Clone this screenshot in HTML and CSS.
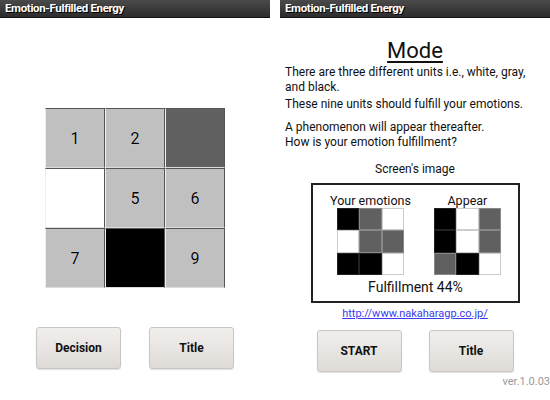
FILE: index.html
```html
<!DOCTYPE html>
<html lang="en">
<head>
  <meta charset="UTF-8">
  <meta name="viewport" content="width=device-width, initial-scale=1.0">
  <title>Emotion-Fulfilled Energy</title>
  <link rel="stylesheet" href="styles.css">
</head>
<body>

  <div class="phone">
    <div class="titlebar">Emotion-Fulfilled Energy</div>

    <div class="board">
      <div class="cell gray">1</div>
      <div class="cell gray">2</div>
      <div class="cell dark"></div>
      <div class="cell white"></div>
      <div class="cell gray">5</div>
      <div class="cell gray">6</div>
      <div class="cell gray">7</div>
      <div class="cell black"></div>
      <div class="cell gray">9</div>
    </div>

    <div class="buttons buttons-left">
      <button class="btn">Decision</button>
      <button class="btn">Title</button>
    </div>
  </div>

  <div class="phone">
    <div class="titlebar">Emotion-Fulfilled Energy</div>

    <h1 class="mode">Mode</h1>

    <div class="intro">
      <p>There are three different units i.e., white, gray, and black.</p>
      <p>These nine units should fulfill your emotions.</p>
      <p class="spaced">A phenomenon will appear thereafter.<br>How is your emotion fulfillment?</p>
    </div>

    <div class="caption">Screen's image</div>

    <div class="preview">
      <div class="preview-row">
        <div class="mini-col">
          <div class="mini-label">Your emotions</div>
          <div class="mini-grid">
            <div class="m black"></div><div class="m dark"></div><div class="m white"></div>
            <div class="m white"></div><div class="m dark"></div><div class="m dark"></div>
            <div class="m black"></div><div class="m black"></div><div class="m white"></div>
          </div>
        </div>
        <div class="mini-col">
          <div class="mini-label">Appear</div>
          <div class="mini-grid">
            <div class="m black"></div><div class="m white"></div><div class="m dark"></div>
            <div class="m black"></div><div class="m white"></div><div class="m dark"></div>
            <div class="m dark"></div><div class="m black"></div><div class="m white"></div>
          </div>
        </div>
      </div>
      <div class="score">Fulfillment 44%</div>
    </div>

    <a class="link" href="#">http://www.nakaharagp.co.jp/</a>

    <div class="buttons buttons-right">
      <button class="btn">START</button>
      <button class="btn">Title</button>
    </div>

    <div class="version">ver.1.0.03</div>
  </div>

</body>
</html>
```

FILE: styles.css
```css
body {
  font-family: Roboto, "Open Sans", sans-serif;
  margin: 0;
  padding: 0;
  width: 550px;
  height: 400px;
  display: flex;
  gap: 10px;
  background-color: #ffffff;
  color: #111;
  overflow: hidden;
}

.phone {
  width: 270px;
  display: flex;
  flex-direction: column;
}

.titlebar {
  height: 17px;
  line-height: 17px;
  padding-left: 5px;
  background: linear-gradient(#4a4a4a, #2c2c2c);
  border-bottom: 1px solid #111;
  color: #fff;
  font-weight: bold;
  font-size: 11.5px;
  letter-spacing: -0.35px;
  text-shadow: 1px 1px 0 #000;
}

/* left screen */

.board {
  width: 180px;
  height: 180px;
  margin: 90px auto 0;
  display: grid;
  grid-template-columns: repeat(3, 1fr);
  grid-template-rows: repeat(3, 1fr);
}

.cell {
  box-sizing: border-box;
  border: 1px solid;
  border-color: #555 #555 #ddd #eee;
  display: flex;
  align-items: center;
  justify-content: center;
  font-size: 16px;
  color: #000;
  text-shadow: 0 0 1px #fff;
}

.gray { background-color: #c0c0c0; }
.dark { background-color: #606060; }
.white { background-color: #ffffff; }
.black { background-color: #000000; }

.buttons {
  display: flex;
  justify-content: center;
}

.buttons-left {
  margin-top: 39px;
  gap: 28px;
}

.buttons-right {
  margin-top: 9px;
  gap: 27px;
}

.btn {
  width: 85px;
  height: 42px;
  padding: 0;
  font-family: Roboto, sans-serif;
  font-weight: bold;
  font-size: 12px;
  color: #111;
  background: linear-gradient(#f1efec, #dedbd7);
  border: 1px solid #c8c6c2;
  border-radius: 3px;
  box-shadow: 0 1px 1px rgba(0, 0, 0, 0.12);
}

/* right screen */

.mode {
  margin: 20px 0 0;
  text-align: center;
  font-size: 22px;
  line-height: 26px;
  font-weight: normal;
  text-decoration: underline;
  text-decoration-thickness: 2px;
  text-underline-offset: 3px;
}

.intro {
  margin-top: 1px;
  padding: 0 8px 0 5px;
  font-size: 12px;
  line-height: 15px;
}

.intro p {
  margin: 2px 0 0;
}

.intro p:first-child {
  margin-top: 0;
}

.intro .spaced {
  margin-top: 8px;
}

.caption {
  margin-top: 12px;
  text-align: center;
  font-size: 12px;
  line-height: 15px;
}

.preview {
  width: 205px;
  margin: 6px 0 0 31px;
  padding: 9px 0 5px;
  border: 2px solid #222;
}

.preview-row {
  display: flex;
  justify-content: center;
  gap: 23px;
}

.mini-col {
  display: flex;
  flex-direction: column;
  align-items: center;
}

.mini-label {
  font-size: 12.5px;
  line-height: 14px;
}

.mini-grid {
  width: 67px;
  height: 67px;
  display: grid;
  grid-template-columns: repeat(3, 1fr);
  grid-template-rows: repeat(3, 1fr);
}

.m {
  box-sizing: border-box;
  border: 1px solid #888;
}

.m.black { border-color: #222; }
.m.white { border-color: #ccc; }

.score {
  margin-top: 4px;
  text-align: center;
  font-size: 14px;
  line-height: 17px;
}

.link {
  margin-top: 4px;
  align-self: center;
  font-size: 11px;
  line-height: 14px;
  color: #3a3af2;
}

.version {
  margin-top: 3px;
  text-align: right;
  font-size: 11px;
  line-height: 13px;
  color: #999;
}
```
